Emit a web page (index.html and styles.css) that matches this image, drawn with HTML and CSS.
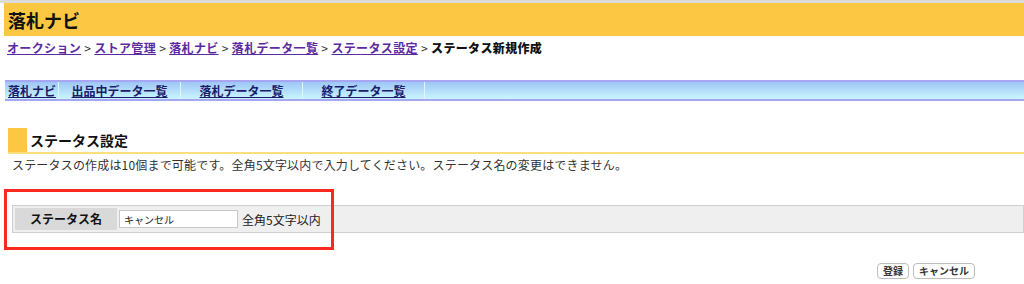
FILE: index.html
```html
<!DOCTYPE html>
<html lang="ja">
<head>
<meta charset="utf-8">
<title>落札ナビ</title>
<link rel="stylesheet" href="styles.css">
</head>
<body>
<div class="topstrip"></div>
<header class="header"><h1 class="title">落札ナビ</h1></header>
<nav class="breadcrumb">
  <a href="#">オークション</a> <span class="sep">&gt;</span>
  <a href="#">ストア管理</a> <span class="sep">&gt;</span>
  <a href="#">落札ナビ</a> <span class="sep">&gt;</span>
  <a href="#">落札データ一覧</a> <span class="sep">&gt;</span>
  <a href="#">ステータス設定</a> <span class="sep">&gt;</span>
  <strong class="current">ステータス新規作成</strong>
</nav>
<div class="menu">
  <a class="menu-item first" href="#">落札ナビ</a>
  <a class="menu-item" href="#">出品中データ一覧</a>
  <a class="menu-item" href="#">落札データ一覧</a>
  <a class="menu-item" href="#">終了データ一覧</a>
  <span class="menu-rest"></span>
</div>
<div class="section">
  <h2 class="section-title"><span class="mark"></span>ステータス設定</h2>
  <p class="desc">ステータスの作成は10個まで可能です。全角5文字以内で入力してください。ステータス名の変更はできません。</p>
  <div class="form-wrap">
    <div class="form-row">
      <div class="label">ステータス名</div>
      <input class="field" type="text" value="キャンセル">
      <span class="hint">全角5文字以内</span>
    </div>
    <div class="highlight"></div>
  </div>
  <div class="actions">
    <button class="btn" type="button">登録</button>
    <button class="btn" type="button">キャンセル</button>
  </div>
</div>
</body>
</html>
```
FILE: styles.css
```css
html, body {
  margin: 0;
  padding: 0;
  background: #fff;
}
body {
  font-family: "Noto Sans CJK JP", "Liberation Sans", sans-serif;
  font-size: 12px;
  color: #222;
  width: 1024px;
  height: 284px;
  overflow: hidden;
}
.topstrip {
  height: 3px;
  background: #dcdcdc;
}
.header {
  margin-left: 4px;
  height: 33px;
  background: #fcc844;
  display: flex;
  align-items: center;
  padding-left: 4px;
}
.title {
  margin: 0;
  font-size: 18px;
  line-height: 20px;
  font-weight: bold;
  color: #111;
}
.breadcrumb {
  padding: 4px 0 0 7px;
  height: 15px;
  line-height: 15px;
  font-size: 12px;
  font-weight: bold;
  letter-spacing: 0.35px;
  white-space: nowrap;
}
.breadcrumb a {
  color: #5b2aa0;
  text-decoration: underline;
}
.breadcrumb .sep {
  color: #333;
  font-weight: normal;
}
.breadcrumb .current {
  color: #111;
}
.menu {
  margin: 25px 0 0 5px;
  height: 17px;
  border-top: 2px solid #a6a6f2;
  border-bottom: 2px solid #a6a6f2;
  background: linear-gradient(#9ec6f6, #c9f6fd);
  display: flex;
  align-items: stretch;
}
.menu-item {
  width: 121px;
  border-right: 1px solid #e4f4ff;
  text-align: center;
  line-height: 17px;
  font-weight: bold;
  font-size: 12px;
  color: #1c1c6c;
  text-decoration: underline;
}
.menu-item.first {
  width: 50px;
  padding-left: 3px;
  text-align: left;
}
.menu-rest {
  flex: 1;
}
.section {
  position: relative;
}
.section-title {
  margin: 27px 0 0 8px;
  height: 24px;
  display: flex;
  align-items: center;
  border-bottom: 2px solid #fcdf7e;
  font-size: 14px;
  line-height: 20px;
  font-weight: bold;
  color: #111;
}
.mark {
  width: 19px;
  background: #fcc844;
  margin-right: 3px;
  align-self: stretch;
}
.desc {
  margin: 3px 0 0 12px;
  line-height: 16px;
  font-size: 12px;
  letter-spacing: 0.18px;
  color: #333;
}
.form-wrap {
  position: relative;
  margin-top: 32px;
}
.form-row {
  margin-left: 12px;
  height: 26px;
  border: 1px solid #cfcfcf;
  background: #efefef;
  display: flex;
  align-items: center;
  padding-left: 2px;
}
.label {
  width: 102px;
  height: 22px;
  background: #d9d9d9;
  font-weight: bold;
  font-size: 12px;
  line-height: 22px;
  text-align: center;
  color: #111;
}
.field {
  margin: 0 0 0 2px;
  width: 119px;
  height: 18px;
  box-sizing: border-box;
  border: 1px solid #c8c8c8;
  background: #fff;
  padding: 0 4px;
  font-family: "Noto Sans CJK JP", sans-serif;
  font-size: 10px;
  color: #222;
}
.hint {
  margin-left: 4px;
  font-size: 12px;
  color: #222;
}
.highlight {
  position: absolute;
  left: 4px;
  top: -16px;
  width: 330px;
  height: 61px;
  box-sizing: border-box;
  border: 3px solid #fb2a1f;
}
.actions {
  margin: 30px 49px 0 0;
  display: flex;
  justify-content: flex-end;
  gap: 4px;
}
.btn {
  height: 16px;
  padding: 0 5px;
  border: 1px solid #bdbdbd;
  border-radius: 4px;
  background: #fff;
  font-family: "Noto Sans CJK JP", sans-serif;
  font-size: 10px;
  line-height: 14px;
  font-weight: bold;
  color: #333;
}
```
